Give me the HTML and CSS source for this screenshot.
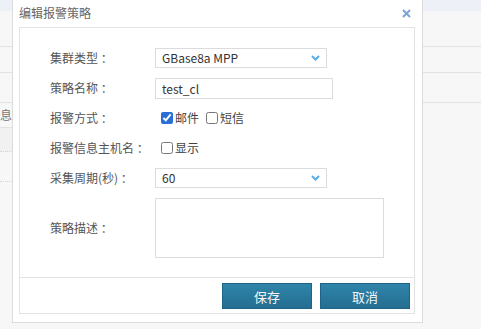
FILE: index.html
```html
<!DOCTYPE html>
<html lang="zh-CN">
<head>
  <meta charset="UTF-8">
  <title>编辑报警策略</title>
  <link rel="stylesheet" href="styles.css">
</head>
<body>
  <div class="grid">
    <div class="grid-head"></div>
    <div class="grid-row"></div>
    <div class="grid-row short"></div>
    <div class="grid-row mid"></div>
    <div class="grid-row side"><div class="cell"><span class="cell-text">息</span></div></div>
    <div class="grid-row side alt"><div class="cell"></div></div>
    <div class="grid-row side dotted"><div class="cell"></div></div>
  </div>

  <div class="dialog">
    <div class="dialog-title">
      <span>编辑报警策略</span>
      <svg class="close" width="9" height="9" viewBox="0 0 9 9">
        <path d="M1 1 L8 8 M8 1 L1 8" stroke="#7ba3d4" stroke-width="2" fill="none"/>
      </svg>
    </div>

    <div class="form">
      <div class="form-row">
        <label>集群类型 ：</label>
        <div class="select">
          <span>GBase8a MPP</span>
          <svg width="9" height="6" viewBox="0 0 9 6"><path d="M1 1 L4.5 4.5 L8 1" stroke="#5aace6" stroke-width="2" fill="none"/></svg>
        </div>
      </div>
      <div class="form-row">
        <label>策略名称 ：</label>
        <input class="text" type="text" value="test_cl">
      </div>
      <div class="form-row">
        <label>报警方式 ：</label>
        <input class="check" type="checkbox" checked><span>邮件</span>
        <input class="check" type="checkbox"><span>短信</span>
      </div>
      <div class="form-row">
        <label>报警信息主机名 ：</label>
        <input class="check" type="checkbox"><span>显示</span>
      </div>
      <div class="form-row">
        <label>采集周期(秒) ：</label>
        <div class="select">
          <span>60</span>
          <svg width="9" height="6" viewBox="0 0 9 6"><path d="M1 1 L4.5 4.5 L8 1" stroke="#5aace6" stroke-width="2" fill="none"/></svg>
        </div>
      </div>
      <div class="form-row desc">
        <label>策略描述 ：</label>
        <textarea></textarea>
      </div>
    </div>

    <div class="dialog-foot">
      <button>保存</button>
      <button>取消</button>
    </div>
  </div>
</body>
</html>
```

FILE: styles.css
```css
* {
  box-sizing: border-box;
}
body {
  margin: 0;
  background: #f7f7f7;
  font-family: "Noto Sans CJK SC", "Noto Sans", sans-serif;
  font-size: 12px;
  color: #555;
  overflow: hidden;
}
.grid-head {
  height: 11px;
  background: #edf0f6;
}
.grid-row {
  height: 36px;
  border-bottom: 1px solid #e2e2e2;
}
.grid-row.short {
  height: 26px;
}
.grid-row.mid {
  height: 30px;
}
.grid-row.side {
  height: 25px;
  border-bottom: none;
}
.grid-row.side .cell {
  width: 14px;
  height: 100%;
  border-bottom: 1px solid #e2e2e2;
  padding-top: 6px;
}
.grid-row.alt {
  height: 24px;
}
.grid-row.alt .cell {
  background: #f1f1f1;
  border-bottom: 1px dotted #d8d8d8;
}
.grid-row.dotted {
  height: 30px;
}
.grid-row.dotted .cell {
  border-bottom: 1px dotted #d8d8d8;
}
.cell-text {
  display: block;
  line-height: 1;
  color: #777;
}

.dialog {
  position: absolute;
  left: 12px;
  top: -1px;
  width: 411px;
  background: #fff;
  border: 1px solid #dcdcdc;
  padding: 0 7px 8px 6px;
}
.dialog-title {
  height: 27px;
  display: flex;
  align-items: center;
  justify-content: space-between;
  padding: 0 4px 1px 0;
  font-size: 12px;
  color: #666;
  line-height: 1;
}
.form {
  border: 1px solid #e3e3e3;
  padding: 20px 0 19px 30px;
}
.form-row {
  display: flex;
  align-items: center;
  height: 20px;
  margin-bottom: 10px;
  line-height: 1;
}
.form-row.desc {
  height: 60px;
  margin-bottom: 0;
}
.form-row label {
  width: 105px;
  flex: none;
  color: #555;
  white-space: nowrap;
}
.form-row span {
  color: #444;
}
.select {
  width: 172px;
  height: 20px;
  border: 1px solid #dcdcdc;
  display: flex;
  align-items: center;
  justify-content: space-between;
  padding: 0 6px 0 6px;
  color: #333;
}
.select span {
  color: #333;
}
.text {
  width: 178px;
  height: 21px;
  border: 1px solid #dcdcdc;
  padding: 0 6px;
  margin: 0;
  font: inherit;
  font-size: 12px;
  color: #333;
  outline: none;
}
.check {
  width: 12px;
  height: 12px;
  margin: 0 2px 0 6px;
  accent-color: #2a6fd8;
}
.check + span + .check {
  margin-left: 7px;
}
textarea {
  width: 229px;
  height: 60px;
  border: 1px solid #dcdcdc;
  resize: none;
  margin: 0;
  outline: none;
}
.dialog-foot {
  border: 1px solid #e3e3e3;
  border-top: none;
  display: flex;
  justify-content: flex-end;
  gap: 8px;
  padding: 5px 4px 4px 0;
}
.dialog-foot button {
  width: 90px;
  height: 26px;
  border: 1px solid #1f6488;
  background: linear-gradient(#2f84aa, #246e91);
  color: #f2f6f8;
  font-family: inherit;
  font-size: 13px;
  line-height: 1;
  padding: 0;
}
```
